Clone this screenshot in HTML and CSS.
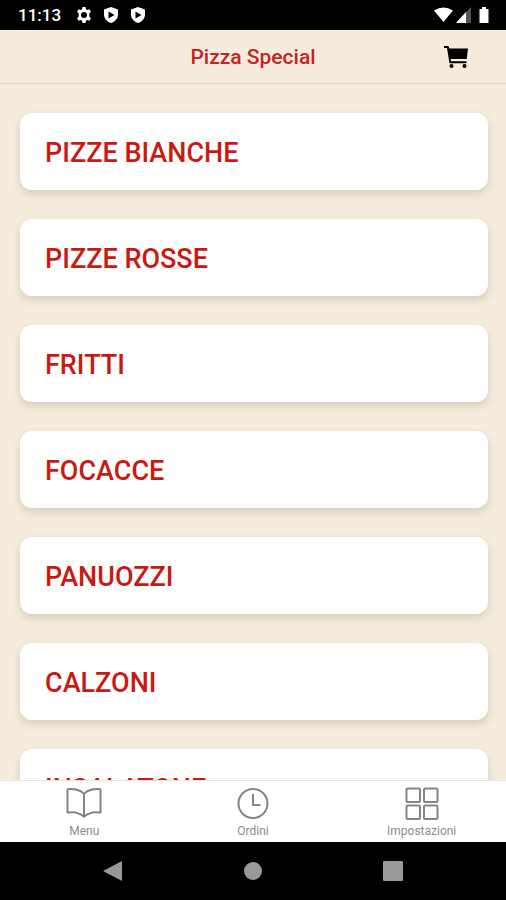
FILE: index.html
```html
<!DOCTYPE html>
<html lang="it">
<head>
<meta charset="utf-8">
<meta name="viewport" content="width=device-width, initial-scale=1">
<title>Pizza Special</title>
<link rel="stylesheet" href="styles.css">
</head>
<body>
<div class="status">
  <span class="time">11:13</span>
  <svg class="status-icon" viewBox="0 0 16 16"><path fill-rule="evenodd" d="M6.500 0h3l.4 2.200 1.500.8 2.100-.8L15 4.800l-1.700 1.400v3.600L15 11.200l-1.500 2.600-2.100-.8-1.500.8-.4 2.200h-3l-.4-2.200-1.500-.8-2.100.8L1 11.200l1.700-1.400V6.200L1 4.800l1.500-2.600 2.100.8 1.500-.8zM8 5a3 3 0 1 0 0 6 3 3 0 0 0 0-6z"/></svg>
  <svg class="status-icon" viewBox="0 0 16 16"><path fill-rule="evenodd" d="M8 0l7 2.500v5c0 4-3 7.300-7 8.500-4-1.200-7-4.500-7-8.500v-5zM5.500 4.500v7l6-3.500z"/></svg>
  <svg class="status-icon" viewBox="0 0 16 16"><path fill-rule="evenodd" d="M8 0l7 2.500v5c0 4-3 7.300-7 8.500-4-1.200-7-4.500-7-8.500v-5zM5.500 4.500v7l6-3.500z"/></svg>
  <svg class="signals" viewBox="0 0 58 16"><path d="M1 3.500Q10.500-2.500 20 3.500L10.500 15z"/><path class="dim" d="M38 0v16H23z"/><path d="M33 5v11H23z"/><path d="M46.500 2h2.500V0h4v2h2.500v14h-9z"/></svg>
</div>
<header class="header">
  <h1 class="title">Pizza Special</h1>
  <button class="cart" aria-label="Carrello"><svg viewBox="0 0 26 24"><path d="M1 1h4.500l.8 2.500H25l-1.300 10.500H7.600l.4 2.300h15.500v2H6.500L4 3H1z"/><circle cx="8.500" cy="21" r="2"/><circle cx="21.500" cy="21" r="2"/></svg></button>
</header>
<main class="list">
  <a class="card" href="#bianche">PIZZE BIANCHE</a>
  <a class="card" href="#rosse">PIZZE ROSSE</a>
  <a class="card" href="#fritti">FRITTI</a>
  <a class="card" href="#focacce">FOCACCE</a>
  <a class="card" href="#panuozzi">PANUOZZI</a>
  <a class="card" href="#calzoni">CALZONI</a>
  <a class="card" href="#insalatone">INSALATONE</a>
</main>
<nav class="tabs">
  <a class="tab" href="#menu"><svg viewBox="0 0 36 34"><path d="M18 7C15 3 9 2 3 2Q1.500 2 1.500 3.500V25.500Q9 24.500 12.500 26.500 16 27.500 18 30 20 27.500 23.500 26.500 27 24.500 34.500 25.500V3.500Q34.500 2 33 2C27 2 21 3 18 7zV30"/></svg>Menu</a>
  <a class="tab" href="#ordini"><svg viewBox="0 0 36 34"><circle cx="18" cy="16.500" r="14.500"/><path d="M18 7v11h7.500"/></svg>Ordini</a>
  <a class="tab" href="#impostazioni"><svg viewBox="0 0 36 34"><rect x="2.500" y="1.500" width="13.500" height="13.500" rx="1"/><rect x="20" y="1.500" width="13.500" height="13.500" rx="1"/><rect x="2.500" y="18.500" width="13.500" height="13.500" rx="1"/><rect x="20" y="18.500" width="13.500" height="13.500" rx="1"/></svg>Impostazioni</a>
</nav>
<div class="system">
  <button class="key" aria-label="Indietro"><svg viewBox="0 0 22 22"><path d="M20 1v20L1 11z"/></svg></button>
  <button class="key" aria-label="Home"><svg viewBox="0 0 22 22"><circle cx="11" cy="11" r="9"/></svg></button>
  <button class="key" aria-label="Recenti"><svg viewBox="0 0 22 22"><rect x="1" y="1" width="20" height="20" rx="1"/></svg></button>
</div>
</body>
</html>
```
FILE: styles.css
```css
* { box-sizing: border-box; }
body {
  margin: 0;
  height: 100vh;
  display: flex;
  flex-direction: column;
  background: #f6ecdd;
  font-family: Roboto, "Liberation Sans", sans-serif;
}
button { border: 0; padding: 0; background: none; }
svg { display: block; }
a { text-decoration: none; }
.status {
  flex: none;
  height: 30px;
  padding: 0 15px 0 18px;
  display: flex;
  align-items: center;
  gap: 11px;
  background: #000;
  color: #fff;
  fill: #fff;
}
.time { font-size: 17px; font-weight: 500; margin-right: 4px; }
.status-icon { width: 16px; height: 16px; }
.signals { width: 58px; height: 16px; margin-left: auto; }
.dim { fill: #555; }
.header {
  flex: none;
  height: 54px;
  padding: 0 37px;
  display: grid;
  grid-template-columns: 1fr auto 1fr;
  align-items: center;
  border-bottom: 1px solid #dfd6c9;
}
.title {
  grid-column: 2;
  margin: 0;
  font-size: 21px;
  line-height: 24px;
  font-weight: 500;
  color: #c8231f;
}
.cart { justify-self: end; }
.cart svg { width: 26px; height: 24px; }
.list {
  flex: 1;
  min-height: 0;
  overflow: hidden;
  padding: 29px 18px 29px 20px;
  display: flex;
  flex-direction: column;
  gap: 29px;
}
.card {
  flex: none;
  padding: 24px 25px 20px;
  border-radius: 12px;
  background: #fff;
  box-shadow: 0 4px 8px rgba(80, 80, 40, 0.2);
  font-size: 27px;
  line-height: 33px;
  font-weight: 500;
  color: #c91a12;
}
.tabs {
  flex: none;
  height: 62px;
  padding-top: 6px;
  display: grid;
  grid-template-columns: repeat(3, 1fr);
  background: #fff;
  border-top: 1px solid #e6e3df;
}
.tab {
  display: flex;
  flex-direction: column;
  align-items: center;
  font-size: 12px;
  line-height: 20px;
  color: #8c8c8c;
}
.tab svg {
  width: 36px;
  height: 34px;
  fill: none;
  stroke: #858585;
  stroke-width: 2;
  stroke-linejoin: round;
}
.system {
  flex: none;
  height: 58px;
  display: flex;
  justify-content: center;
  background: #000;
}
.key { width: 140px; display: grid; place-items: center; }
.key svg { width: 22px; height: 22px; fill: #999; }
```
